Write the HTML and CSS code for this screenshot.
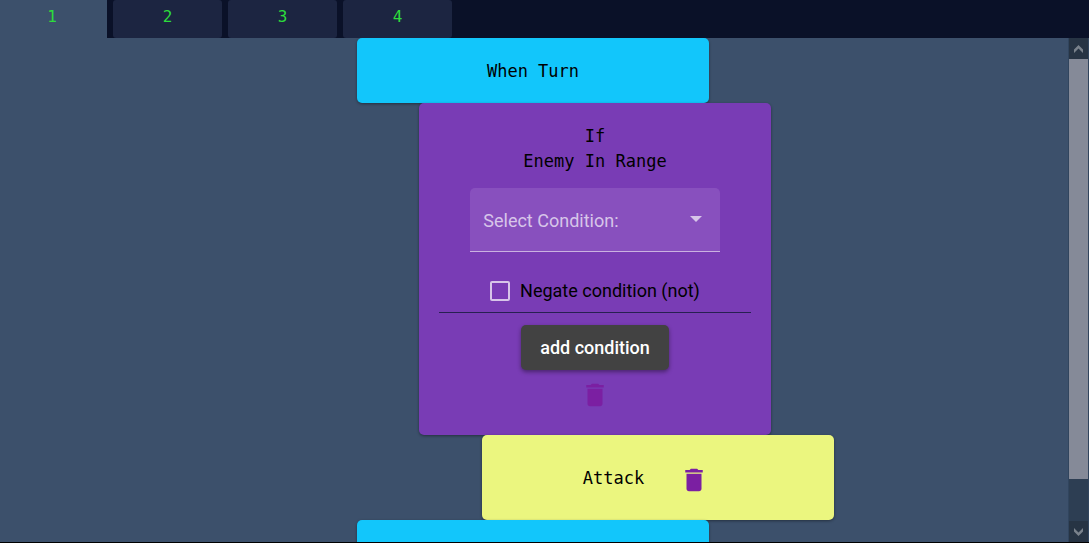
FILE: index.html
```html
<!DOCTYPE html>
<html lang="en">
<head>
<meta charset="utf-8">
<meta name="viewport" content="width=device-width, initial-scale=1">
<title>Block editor</title>
<link rel="stylesheet" href="styles.css">
</head>
<body>
<nav class="tabs">
  <button class="tab tab-active" type="button">1</button>
  <button class="tab" type="button">2</button>
  <button class="tab" type="button">3</button>
  <button class="tab" type="button">4</button>
</nav>
<div class="workspace">
  <main class="canvas">
    <div class="blocks">
      <section class="block block-event">When Turn</section>
      <section class="block block-if">
        <div>If</div>
        <div>Enemy In Range</div>
        <div class="select-field">
          <select class="select" aria-label="Select Condition">
            <option>Select Condition:</option>
          </select>
          <svg class="select-arrow" width="12" height="6" viewBox="0 0 12 6" aria-hidden="true"><path d="M0 0h12L6 6z" fill="currentColor"/></svg>
        </div>
        <label class="negate"><input class="checkbox" type="checkbox">Negate condition (not)</label>
        <hr class="divider">
        <button class="add-button" type="button">add condition</button>
        <button class="delete-button" type="button" aria-label="Delete if block">
          <svg width="30" height="30" viewBox="0 0 24 24" aria-hidden="true"><path fill="currentColor" d="M6 19c0 1.100.9 2 2 2h8c1.100 0 2-.9 2-2V7H6v12zM19 4h-3.500l-1-1h-5l-1 1H5v2h14V4z"/></svg>
        </button>
      </section>
      <section class="block block-action">
        <span>Attack</span>
        <button class="delete-button" type="button" aria-label="Delete attack block">
          <svg width="30" height="30" viewBox="0 0 24 24" aria-hidden="true"><path fill="currentColor" d="M6 19c0 1.100.9 2 2 2h8c1.100 0 2-.9 2-2V7H6v12zM19 4h-3.500l-1-1h-5l-1 1H5v2h14V4z"/></svg>
        </button>
      </section>
      <section class="block block-event"></section>
    </div>
  </main>
  <div class="scrollbar">
    <button class="scroll-button" type="button" aria-label="Scroll up">
      <svg width="9" height="8" viewBox="0 0 9 8" aria-hidden="true"><path d="M4.500 0L9 4.500V8L4.500 3.500L0 8V4.500z" fill="currentColor"/></svg>
    </button>
    <div class="scroll-track"><div class="scroll-thumb"></div></div>
    <button class="scroll-button" type="button" aria-label="Scroll down">
      <svg width="9" height="8" viewBox="0 0 9 8" aria-hidden="true"><path d="M4.500 8L9 3.500V0L4.500 4.500L0 0V3.500z" fill="currentColor"/></svg>
    </button>
  </div>
</div>
</body>
</html>
```
FILE: styles.css
```css
* {
  box-sizing: border-box;
}

body {
  margin: 0;
  height: 100vh;
  display: flex;
  flex-direction: column;
  overflow: hidden;
  background: #3c506b;
  border-bottom: 1px solid #000;
  color: #000;
  font-family: "DejaVu Sans Mono", monospace;
  font-size: 17px;
  line-height: 25px;
}

button {
  border: 0;
  padding: 0;
  cursor: pointer;
}

.tabs {
  display: flex;
  flex: none;
  gap: 6px;
  height: 38px;
  background: #0a1128;
}

.tab {
  width: 109px;
  padding-bottom: 5px;
  border-radius: 3px;
  background: #1c2541;
  color: #2ddc3c;
  font-family: inherit;
  font-size: 16px;
}

.tab-active {
  width: 107px;
  padding-right: 3px;
  border-radius: 0;
  background: #3c506b;
}

.workspace {
  display: flex;
  flex: 1;
  min-height: 0;
}

.canvas {
  flex: 1;
  padding-right: 2px;
  overflow: hidden;
}

.blocks {
  width: 33%;
  margin: 0 auto;
}

.block {
  border-radius: 5px;
  text-align: center;
  box-shadow: 0 1px 3px rgba(0, 0, 0, 0.4);
}

.block-event {
  min-height: 65px;
  padding: 21px 20px 19px;
  background: #12c6fb;
}

.block-if {
  display: flex;
  flex-direction: column;
  align-items: center;
  margin: 0 -62px 0 62px;
  padding: 21px 20px 19px;
  background: #793cb5;
}

.select-field {
  position: relative;
  width: 80%;
  margin-top: 14px;
}

.select {
  display: block;
  width: 100%;
  height: 64px;
  padding: 2px 40px 0 13px;
  appearance: none;
  border: 0;
  border-bottom: 1px solid #cab1e1;
  border-radius: 5px 5px 0 0;
  background: #8850be;
  color: #d7c5e9;
  font-family: Roboto, sans-serif;
  font-size: 18px;
}

.select-arrow {
  position: absolute;
  top: 28px;
  right: 18px;
  color: #d7c5e9;
  pointer-events: none;
}

.negate {
  display: flex;
  align-items: center;
  gap: 10px;
  margin-top: 26px;
  font-family: Roboto, sans-serif;
  font-size: 18px;
}

.checkbox {
  width: 20px;
  height: 20px;
  margin: 0;
  appearance: none;
  border: 2px solid #d7c5e9;
  border-radius: 2px;
}

.checkbox:checked {
  background: #d7c5e9;
}

.divider {
  width: 100%;
  margin: 9px 0 12px;
  border: 0;
  border-top: 1px solid #272052;
}

.add-button {
  height: 45px;
  padding: 0 19px;
  border-radius: 5px;
  background: #424242;
  box-shadow: 0 2px 4px rgba(0, 0, 0, 0.4);
  color: #fff;
  font-family: Roboto, sans-serif;
  font-size: 18px;
  font-weight: 500;
}

.delete-button {
  display: flex;
  align-items: center;
  justify-content: center;
  width: 50px;
  height: 46px;
  padding-top: 4px;
  background: transparent;
  color: #7b1fa2;
}

.block-action {
  display: flex;
  align-items: center;
  justify-content: center;
  gap: 25px;
  margin: 0 -125px 0 125px;
  padding: 20px 14px 19px 0;
  background: #ebf67f;
}

.scrollbar {
  display: flex;
  flex-direction: column;
  flex: none;
  width: 21px;
  padding: 0 1px;
  background: #31455e;
}

.scroll-button {
  display: flex;
  align-items: center;
  justify-content: center;
  height: 21px;
  background: #273444;
  color: #7a828c;
}

.scroll-track {
  flex: 1;
  background: #2d3e53;
}

.scroll-thumb {
  height: 91%;
  background: #858a98;
}
```
